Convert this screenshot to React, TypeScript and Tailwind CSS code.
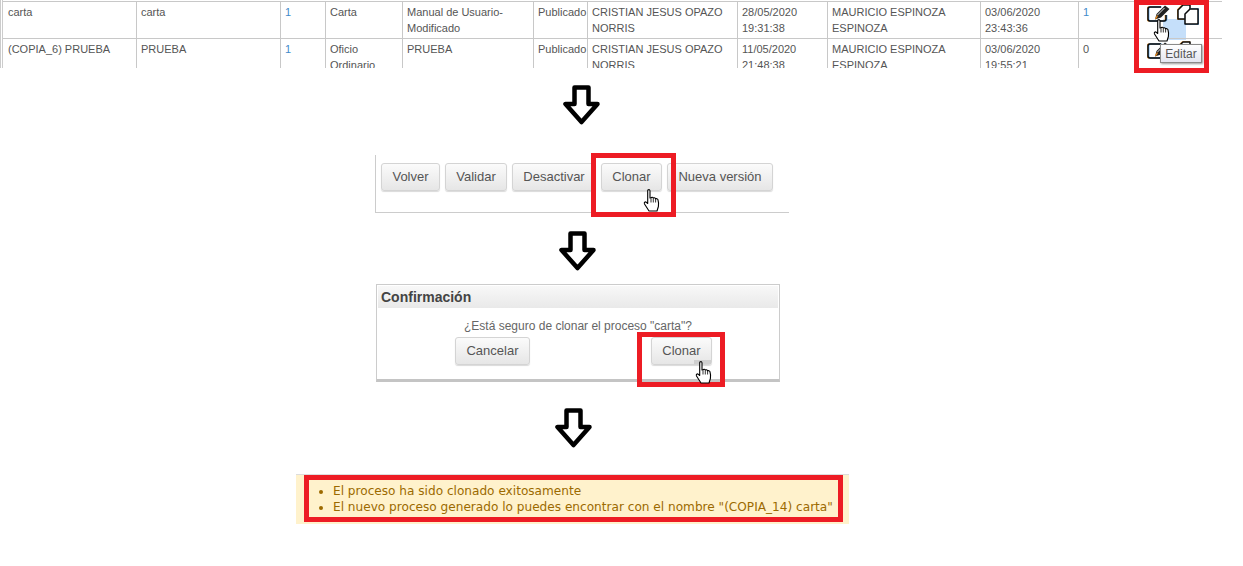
const rows = [
  ["carta", "carta", "1", "Carta", "Manual de Usuario-Modificado", "Publicado", "CRISTIAN JESUS OPAZO NORRIS", "28/05/2020 19:31:38", "MAURICIO ESPINOZA ESPINOZA", "03/06/2020 23:43:36", "1"],
  ["(COPIA_6) PRUEBA", "PRUEBA", "1", "Oficio Ordinario", "PRUEBA", "Publicado", "CRISTIAN JESUS OPAZO NORRIS", "11/05/2020 21:48:38", "MAURICIO ESPINOZA ESPINOZA", "03/06/2020 19:55:21", "0"],
];

function DownArrow() {
  return (
    <svg width="38" height="40" viewBox="0 0 38 40" className="block">
      <path d="M11.5 2.5H25.5V19H34.5L18.5 37L2.5 19H11.5Z" fill="#fff" stroke="#000" strokeWidth="4.5" strokeLinejoin="round" />
    </svg>
  );
}

function Hand({ className }: { className: string }) {
  return (
    <svg width="18" height="25" viewBox="0 0 18 24" className={className}>
      <path
        d="M5 1.5C6 .8 7 1.3 7 2.5V9.5L8 9.5C8.3 8.5 10 8.5 10.3 9.7C10.8 9 12.2 9.2 12.5 10.3C13.2 9.8 14.8 10.2 15 11.5C15.6 13.5 15.8 16 15.4 18L14 22.5H6L1.5 15.5C.8 14.2 2.2 12.7 3.4 13.8L4.7 15V2.5C4.7 2.1 4.8 1.7 5 1.5Z"
        fill="#fff"
        stroke="#000"
        strokeWidth="1.1"
        strokeLinejoin="round"
      />
      <path d="M8 10V14M10.3 10V14M12.6 10.5V14" fill="none" stroke="#000" strokeWidth="0.8" />
    </svg>
  );
}

const boxPath = "M14 3H3Q1 3 1 5V15Q1 17 3 17H17Q19 17 19 15V11";
const backDoc = "M8 15H1V6L6 1H13V6";
const frontDoc = "M8 20V10L13 5H21V20Z";

function EditIcon() {
  return (
    <svg width="24" height="20" viewBox="0 0 24 20" className="block">
      <path d={boxPath} fill="none" stroke="#f0a040" strokeWidth="1.6" transform="translate(-0.6 0)" />
      <path d={boxPath} fill="none" stroke="#60a8e8" strokeWidth="1.6" transform="translate(0.6 0)" />
      <path d={boxPath} fill="none" stroke="#0a0a0a" strokeWidth="1.5" />
      <path d="M9.5 10L18 1.5L22.5 5L14 13.5L8 15.5Z" fill="#222" />
      <path d="M10.5 11L17.5 4" stroke="#e8e8e8" strokeWidth="1" />
      <path d="M8.5 15L10.5 11.5" stroke="#e8891c" strokeWidth="1.4" />
    </svg>
  );
}

function CopyIcon() {
  return (
    <svg width="22" height="21" viewBox="0 0 22 21" className="block">
      <path d={backDoc} fill="none" stroke="#f0a040" strokeWidth="1.6" transform="translate(-0.6 0)" />
      <path d={backDoc} fill="#fff" stroke="#0a0a0a" strokeWidth="1.5" strokeLinejoin="round" />
      <path d={frontDoc} fill="none" stroke="#60a8e8" strokeWidth="1.6" transform="translate(0.6 0)" />
      <path d={frontDoc} fill="#fff" stroke="#0a0a0a" strokeWidth="1.5" strokeLinejoin="round" />
    </svg>
  );
}

function Btn({ label, className }: { label: string; className: string }) {
  return (
    <div
      className={`flex h-[28px] items-center justify-center rounded-[3px] border border-[#d4d4d4] bg-gradient-to-b from-[#fbfbfb] to-[#e6e6e6] pb-px text-[13px] text-[#555] shadow-[0_1px_1px_rgba(0,0,0,0.15)] ${className}`}
    >
      {label}
    </div>
  );
}

function RedBox({ className }: { className: string }) {
  return <div className={`absolute border-[5px] border-[#ed1c24] ${className}`} />;
}

export default function App() {
  return (
    <div className="relative h-[566px] w-[1243px] overflow-hidden bg-white font-['Liberation_Sans',sans-serif]">
      {/* fila con el cursor encima */}
      <div className="absolute left-[1163px] top-[19px] h-[21px] w-[23px] bg-[#c5dffa]" />

      {/* tabla */}
      <div className="relative h-[68px] w-[1222px] overflow-hidden border-l-[3px] border-double border-[#ccc] pt-px">
        {rows.map((row) => (
          <div
            key={row[0]}
            className="grid h-[37px] grid-cols-[134px_144px_45px_77px_131px_54px_150px_90px_153px_98px_142px] border-t border-[#c8c8c8]"
          >
            {row.map((cell, i) =>
              i === 10 ? (
                <div key={i} className="flex h-full pl-[4px] pt-[2px] text-[11px] leading-[16px]">
                  <span className={`w-[64px] ${cell === "1" ? "text-[#428bca]" : "text-[#555]"}`}>{cell}</span>
                  <div className="flex gap-[6px]">
                    <EditIcon />
                    <CopyIcon />
                  </div>
                </div>
              ) : (
                <div
                  key={i}
                  className={`h-full border-r border-[#c8c8c8] pr-[2px] pt-[2px] text-[11px] leading-[16px] ${i === 0 ? "pl-[5px]" : "pl-[4px]"} ${
                    i === 2 ? "text-[#428bca]" : "text-[#555]"
                  }`}
                >
                  {cell}
                </div>
              ),
            )}
          </div>
        ))}
      </div>

      <Hand className="absolute left-[1153px] top-[18px]" />
      <div className="absolute left-[1160px] top-[44px] flex h-[19px] w-[42px] items-center justify-center border border-[#8a8a8a] bg-gradient-to-b from-white to-[#e4e5f0] text-[12px] text-[#575757] shadow-[1px_1px_2px_rgba(0,0,0,0.4)]">
        Editar
      </div>
      <RedBox className="left-[1134px] top-0 h-[73px] w-[75px]" />

      <div className="ml-[563px] mt-[17px]">
        <DownArrow />
      </div>

      {/* barra de acciones */}
      <div className="ml-[375px] mt-[30px] flex h-[58px] w-[414px] gap-[5px] border-b border-l border-[#ccc] pl-[5px] pt-[8px]">
        <Btn label="Volver" className="w-[59px]" />
        <Btn label="Validar" className="w-[62px]" />
        <Btn label="Desactivar" className="w-[84px]" />
        <Btn label="Clonar" className="w-[61px]" />
        <Btn label="Nueva versión" className="w-[106px]" />
      </div>
      <RedBox className="left-[591px] top-[153px] h-[64px] w-[85px]" />
      <Hand className="absolute left-[643px] top-[188px]" />

      <div className="ml-[559px] mt-[18px]">
        <DownArrow />
      </div>

      {/* confirmacion */}
      <div className="ml-[376px] mt-[13px] h-[98px] w-[404px] border border-b-[3px] border-[#ccc] border-b-[#c4c4c4] p-px">
        <div className="flex h-[22px] items-center bg-gradient-to-b from-[#f8f8f8] to-[#e9e9e9] pl-[3px] text-[14px] font-bold text-[#444]">
          Confirmación
        </div>
        <div className="mt-[11px] pl-[86px] text-[12px] leading-[14px] text-[#666]">¿Está seguro de clonar el proceso "carta"?</div>
        <div className="ml-[77px] mt-[4px] flex gap-[121px]">
          <Btn label="Cancelar" className="w-[75px]" />
          <Btn label="Clonar" className="w-[61px]" />
        </div>
      </div>
      <div className="absolute left-[694px] top-[360px] h-[4px] w-[17px] bg-[#cfcfcf]" />
      <RedBox className="left-[637px] top-[332px] h-[55px] w-[88px]" />
      <Hand className="absolute left-[695px] top-[360px]" />

      <div className="ml-[555px] mt-[26px]">
        <DownArrow />
      </div>

      {/* mensaje */}
      <div className="ml-[296px] mt-[26px] h-[50px] w-[553px] border-t border-[#ddd] bg-[#fff2cc] pl-[21px] pt-[8px] font-['DejaVu_Sans',sans-serif] text-[12.12px] leading-[16px] text-[#9c6a00]">
        <ul className="list-disc pl-[16px]">
          <li>El proceso ha sido clonado exitosamente</li>
          <li>El nuevo proceso generado lo puedes encontrar con el nombre "(COPIA_14) carta"</li>
        </ul>
      </div>
      <RedBox className="left-[304px] top-[475px] h-[47px] w-[539px]" />
    </div>
  );
}
